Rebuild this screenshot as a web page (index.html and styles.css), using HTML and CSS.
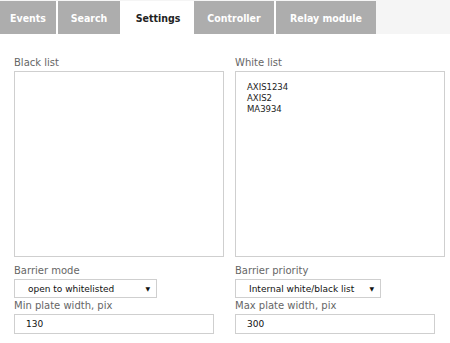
FILE: index.html
```html
<!DOCTYPE html>
<html>
<head>
<meta charset="utf-8">
<link rel="stylesheet" href="styles.css">
</head>
<body>
<nav class="tabs">
  <div class="tab tab-events">Events</div>
  <div class="tab tab-search">Search</div>
  <div class="tab tab-settings active">Settings</div>
  <div class="tab tab-controller">Controller</div>
  <div class="tab tab-relay">Relay module</div>
</nav>
<main class="content">
  <section class="col">
    <div class="label">Black list</div>
    <div class="listbox"></div>
    <div class="label label-gap">Barrier mode</div>
    <div class="select select-mode"><span>open to whitelisted</span><span class="arrow">▼</span></div>
    <div class="label">Min plate width, pix</div>
    <div class="input">130</div>
  </section>
  <section class="col">
    <div class="label">White list</div>
    <div class="listbox">
      <div class="item">AXIS1234</div>
      <div class="item">AXIS2</div>
      <div class="item">MA3934</div>
    </div>
    <div class="label label-gap">Barrier priority</div>
    <div class="select select-priority"><span>Internal white/black list</span><span class="arrow">▼</span></div>
    <div class="label">Max plate width, pix</div>
    <div class="input">300</div>
  </section>
</main>
</body>
</html>
```

FILE: styles.css
```css
html, body {
  margin: 0;
  padding: 0;
  background: #fff;
  font-family: "DejaVu Sans", Verdana, sans-serif;
}

.tabs {
  display: flex;
  height: 33px;
  padding-top: 1px;
  background: #f5f5f5;
}

.tab {
  display: flex;
  align-items: center;
  justify-content: center;
  height: 33px;
  box-sizing: border-box;
  background: #adadad;
  color: #fff;
  font-family: "DejaVu Sans Condensed", "DejaVu Sans", sans-serif;
  font-weight: bold;
  font-size: 10.5px;
  border-right: 2px solid #fff;
}

.tab.active {
  background: #fff;
  color: #222;
}

.tab-events { width: 58px; }
.tab-search { width: 64px; }
.tab-settings { width: 72px; border-right: none; }
.tab-controller { width: 82px; }
.tab-relay { width: 100px; border-right: none; }

.content {
  display: flex;
  gap: 11px;
  padding: 21px 0 0 14px;
}

.col {
  width: 210px;
  display: flex;
  flex-direction: column;
}

.label {
  font-size: 10px;
  color: #666;
  line-height: 16px;
  height: 16px;
}

.label-gap {
  margin-top: 6px;
}

.listbox {
  box-sizing: border-box;
  height: 186px;
  border: 1px solid #cfcfcf;
  padding: 10px 11px;
}

.item {
  font-size: 8.5px;
  line-height: 11px;
  color: #222;
}

.select {
  box-sizing: border-box;
  height: 19px;
  border: 1px solid #cfcfcf;
  display: flex;
  align-items: center;
  justify-content: space-between;
  padding: 0 6px 0 13px;
  font-size: 9px;
  color: #111;
}

.select-mode { width: 143px; }
.select-priority { width: 146px; }

.arrow {
  font-size: 6px;
}

.input {
  box-sizing: border-box;
  height: 20px;
  width: 200px;
  margin-bottom: 4px;
  border: 1px solid #cfcfcf;
  display: flex;
  align-items: center;
  padding-left: 11px;
  font-size: 9px;
  color: #111;
}
```
